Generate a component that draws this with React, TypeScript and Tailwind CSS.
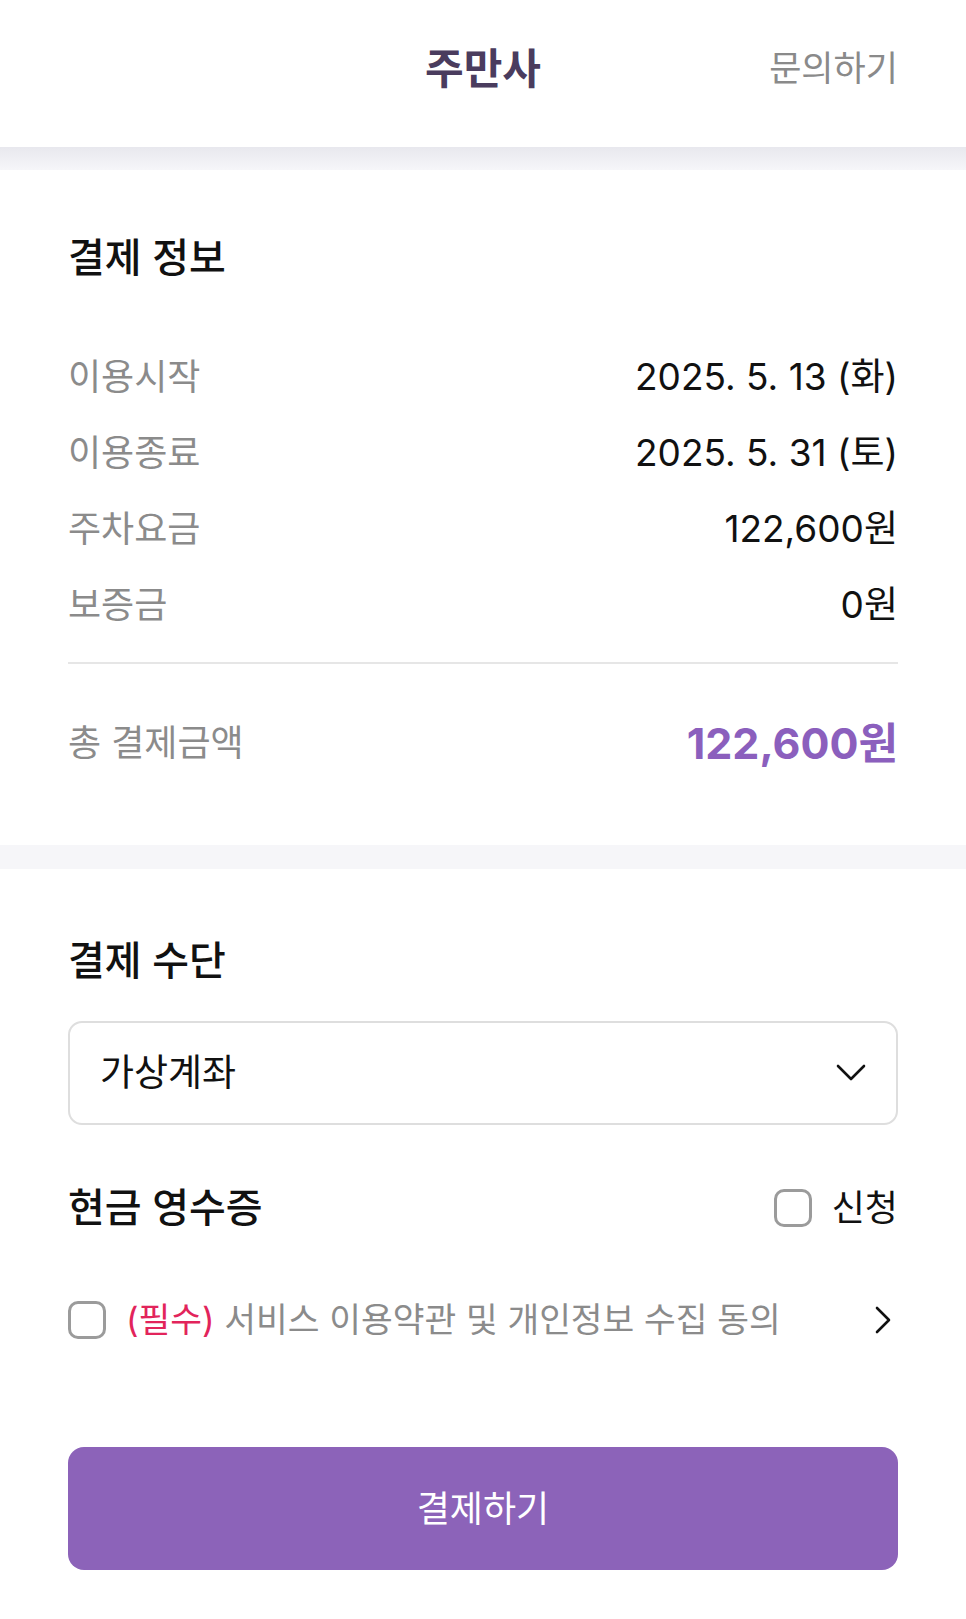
import { useState } from 'react'

const rows = [
  { label: '이용시작', value: '2025. 5. 13 (화)' },
  { label: '이용종료', value: '2025. 5. 31 (토)' },
  { label: '주차요금', value: '122,600원' },
  { label: '보증금', value: '0원' },
]

function Checkbox({ checked, onClick }: { checked: boolean; onClick: () => void }) {
  return (
    <button
      onClick={onClick}
      className={`w-[38px] h-[38px] shrink-0 rounded-[10px] border-[3px] ${
        checked ? 'border-[#8b63ba] bg-[#8b63ba]' : 'border-[#9b9b9b] bg-white'
      }`}
    />
  )
}

export default function App() {
  const [receipt, setReceipt] = useState(false)
  const [agree, setAgree] = useState(false)

  return (
    <div className="min-h-screen bg-white font-[Inter,'Noto_Sans_CJK_KR',sans-serif] text-[#111]">
      {/* header */}
      <header className="h-[147px] px-[68px] pb-[10px] grid grid-cols-3 items-center bg-white">
        <div />
        <h1 className="text-center text-[42px] font-bold text-[#4a3c5e]">주만사</h1>
        <div className="text-right text-[35px] text-[#8a8a8a]">문의하기</div>
      </header>
      <div className="h-[23px] bg-linear-to-b from-[#e8e8ee] to-[#f6f6f9]" />

      {/* payment info */}
      <section className="px-[68px] pt-[62px] pb-[62px] bg-white">
        <h2 className="h-[52px] flex items-center text-[40px] font-medium">결제 정보</h2>
        <div className="mt-[55px]">
          {rows.map((r) => (
            <div key={r.label} className="h-[76px] flex items-center justify-between">
              <span className="text-[36px] text-[#8b8b8b]">{r.label}</span>
              <span className="text-[37px] text-[#111]">{r.value}</span>
            </div>
          ))}
        </div>
        <div className="mt-[19px] h-[2px] bg-[#e6e6e6]" />
        <div className="mt-[39px] h-[80px] flex items-center justify-between">
          <span className="text-[36px] text-[#8b8b8b]">총 결제금액</span>
          <span className="text-[43px] font-bold text-[#8b5fbd]">122,600원</span>
        </div>
      </section>

      <div className="h-[24px] bg-[#f6f6f9]" />

      {/* payment method */}
      <section className="px-[68px] pt-[66px] pb-[50px] bg-white">
        <h2 className="h-[52px] flex items-center text-[40px] font-medium">결제 수단</h2>
        <button className="mt-[34px] w-full h-[104px] px-[30px] flex items-center justify-between rounded-[14px] border-2 border-[#dedede] bg-white">
          <span className="text-[37px] text-[#111]">가상계좌</span>
          <svg width="30" height="18" viewBox="0 0 30 18" fill="none">
            <path d="M2 2 L15 15 L28 2" stroke="#111" strokeWidth="2.6" strokeLinecap="round" strokeLinejoin="round" />
          </svg>
        </button>

        <div className="mt-[57px] h-[52px] flex items-center justify-between">
          <span className="text-[40px] font-medium">현금 영수증</span>
          <label className="flex items-center gap-[20px]">
            <Checkbox checked={receipt} onClick={() => setReceipt(!receipt)} />
            <span className="text-[36px]">신청</span>
          </label>
        </div>

        <div className="mt-[60px] h-[52px] flex items-center justify-between">
          <div className="flex items-center gap-[20px]">
            <Checkbox checked={agree} onClick={() => setAgree(!agree)} />
            <span className="text-[34.5px] text-[#8b8b8b]">
              <span className="text-[#e2245b]">(필수)</span> 서비스 이용약관 및 개인정보 수집 동의
            </span>
          </div>
          <svg width="18" height="30" viewBox="0 0 18 30" fill="none" className="mr-[6px]">
            <path d="M3 3 L15 15 L3 27" stroke="#111" strokeWidth="2.6" strokeLinecap="round" strokeLinejoin="round" />
          </svg>
        </div>

        <button className="mt-[101px] w-full h-[123px] rounded-[16px] bg-[#8c63b9] text-white text-[36px]">
          결제하기
        </button>
      </section>
    </div>
  )
}
